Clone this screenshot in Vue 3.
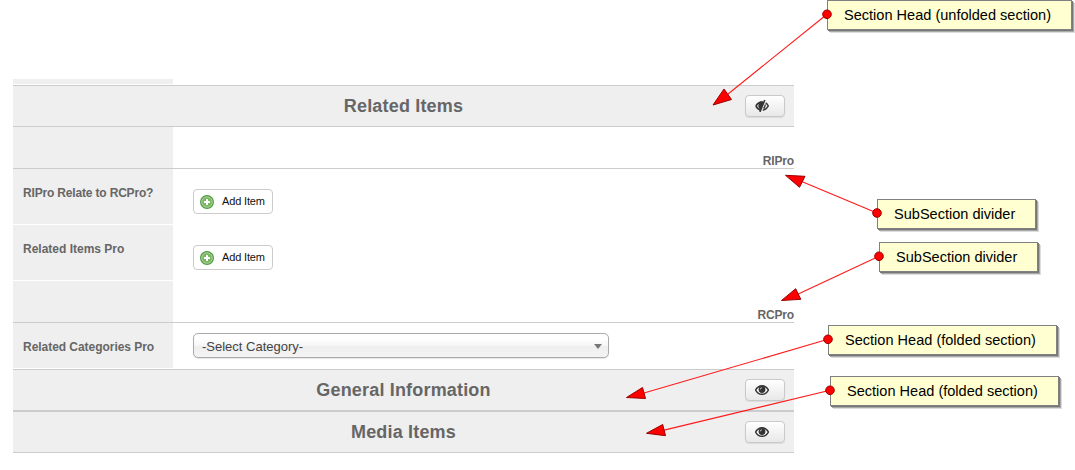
<script setup>
const rows = [
  { type: 'head', title: 'Related Items', open: true },
  { type: 'divider', title: 'RIPro' },
  { type: 'item', label: 'RIPro Relate to RCPro?', tight: true },
  { type: 'item', label: 'Related Items Pro' },
  { type: 'divider', title: 'RCPro' },
  { type: 'select', label: 'Related Categories Pro', value: '-Select Category-' },
  { type: 'head', title: 'General Information', open: false },
  { type: 'head', title: 'Media Items', open: false },
]

const notes = [
  { text: 'Section Head (unfolded section)', x: 827, y: 0, w: 245, dot: [827, 14.3], tip: [713, 105], base: [724, 89, 731.5, 99.5] },
  { text: 'SubSection divider', x: 877, y: 199, w: 159, dot: [877, 213], tip: [785.5, 175.3], base: [805, 176.3, 799.5, 187.3] },
  { text: 'SubSection divider', x: 879, y: 242, w: 159, dot: [879, 256.3], tip: [781.5, 300.5], base: [795.7, 288.7, 800.8, 299.3] },
  { text: 'Section Head (folded section)', x: 828, y: 325, w: 229, dot: [828, 339.3], tip: [626.5, 397.5], base: [642.5, 387.5, 645.5, 398.5] },
  { text: 'Section Head (folded section)', x: 830, y: 376, w: 229, dot: [830, 390.3], tip: [646.5, 433.3], base: [662.7, 424.5, 665.5, 435.7] },
]
</script>

<template>
  <main class="page">
    <div class="form">
      <div class="stub"></div>
      <template v-for="(row, i) in rows" :key="i">
        <header v-if="row.type === 'head'" class="head">
          <h2>{{ row.title }}</h2>
          <button class="toggle" type="button">
            <svg width="14" height="12" viewBox="0 0 14 12">
              <template v-if="!row.open">
                <path d="M.6 6C3.7.3 10.3.3 13.4 6 10.3 11.7 3.7 11.7.6 6Z" fill="#fafafa" stroke="#333" stroke-width="1.5" />
                <circle cx="7" cy="5.5" r="3.4" fill="#333" />
                <path d="M5.3 5.4Q5.4 3.9 6.9 3.8" fill="none" stroke="#eee" stroke-width=".8" />
              </template>
              <template v-else>
                <path d="M.9 6Q3.2 1.9 7.8 1.9M.9 6Q2.6 9.3 5.3 10.1" fill="none" stroke="#333" stroke-width="1.7" />
                <path d="M8.9 2 5.6 9.6C3.3 8.3 2.7 5.5 3.9 3.4Q6 1.7 8.9 2Z" fill="#333" />
                <path d="M9.8 0 4.9 11.9" stroke="#333" stroke-width="1.6" />
                <path d="M10.7 2.8Q12.5 4 13.3 6 11.3 9.7 7.8 10.2M10 4.5Q10.6 6.8 8.5 8.4" fill="none" stroke="#333" stroke-width="1.4" />
              </template>
            </svg>
          </button>
        </header>
        <div v-else-if="row.type === 'divider'" class="divider">
          <span class="side"></span>
          <strong>{{ row.title }}</strong>
        </div>
        <div v-else class="row" :class="row.type">
          <label :class="{ tight: row.tight }">{{ row.label }}</label>
          <div class="field">
            <button v-if="row.type === 'item'" class="add" type="button">
              <svg width="14" height="14" viewBox="0 0 14 14">
                <circle cx="7" cy="7" r="6.4" fill="#78b860" stroke="#569747" stroke-width="1.1" />
                <circle cx="7" cy="7" r="5.2" fill="none" stroke="#b4dba5" stroke-width=".8" />
                <path d="M7 4v6M4 7h6" stroke="#fff" stroke-width="2" />
              </svg>
              <span>Add Item</span>
            </button>
            <div v-else class="select">
              <span>{{ row.value }}</span>
              <i></i>
            </div>
          </div>
        </div>
      </template>
    </div>

    <div v-for="(n, i) in notes" :key="i" class="note" :style="{ left: n.x + 'px', top: n.y + 'px', width: n.w + 'px' }">
      {{ n.text }}
    </div>
    <svg class="arrows" width="1075" height="470" viewBox="0 0 1075 470">
      <g v-for="(n, i) in notes" :key="i">
        <line :x1="n.dot[0]" :y1="n.dot[1]" :x2="(n.base[0] + n.base[2]) / 2" :y2="(n.base[1] + n.base[3]) / 2" stroke="#ff1a1a" stroke-width="1.1" />
        <polygon :points="[...n.tip, ...n.base].join(' ')" fill="#f00" stroke="#900" stroke-width="1" />
        <circle :cx="n.dot[0]" :cy="n.dot[1]" r="4.3" fill="#f00" stroke="#900" stroke-width="1" />
      </g>
    </svg>
  </main>
</template>

<style>
body { margin: 0; background: #fff; }
</style>

<style scoped>
* { box-sizing: border-box; }
.page {
  position: relative;
  width: 1075px;
  height: 470px;
  padding: 79px 0 0 13px;
  overflow: hidden;
  font-family: "Liberation Sans", Arial, sans-serif;
  color: #666;
}
.form { width: 781px; }
.stub { width: 160px; height: 5px; margin-bottom: 1px; background: #efefef; }
.head {
  display: grid;
  grid-template-columns: 49px 1fr 49px;
  align-items: center;
  height: 42px;
  background: #efefef;
  border: solid #ccc;
  border-width: 1px 0;
}
.head h2 {
  grid-column: 2;
  margin: 0;
  font-size: 18px;
  line-height: 20px;
  letter-spacing: .18px;
  text-align: center;
}
button { font-family: inherit; }
.toggle {
  display: flex;
  align-items: center;
  width: 40px;
  height: 22px;
  padding: 0 0 0 9px;
  border: 1px solid #c9c9c9;
  border-radius: 4px;
  background: linear-gradient(#fff, #e8e8e8);
  box-shadow: 0 1px 1px rgba(0, 0, 0, .08);
}
.divider {
  display: flex;
  justify-content: space-between;
  align-items: flex-end;
  height: 42px;
  border-bottom: 1px solid #ccc;
}
.side { width: 160px; height: 41px; background: #efefef; }
.divider strong { font-size: 12px; line-height: 14px; letter-spacing: -.15px; }
.row { display: flex; height: 56px; }
.row.select { height: 46px; }
label {
  width: 160px;
  padding: 16px 0 0 10px;
  background: #efefef;
  border-bottom: 1px solid #fff;
  font-size: 12px;
  line-height: 16px;
  font-weight: bold;
  white-space: nowrap;
}
label.tight { letter-spacing: -.17px; }
.row.select label { letter-spacing: -.04px; }
.field { padding: 20px 0 0 20px; }
.row.select .field { padding-top: 10px; }
.add {
  display: flex;
  align-items: center;
  gap: 8px;
  width: 80px;
  height: 25px;
  padding: 0 0 0 6px;
  border: 1px solid #ccc;
  border-radius: 4px;
  background: #fff;
  color: #111;
  font-size: 11px;
  letter-spacing: -.15px;
  white-space: nowrap;
}
.add span { line-height: 13px; padding-bottom: 1px; }
.field .select {
  display: flex;
  justify-content: space-between;
  align-items: center;
  width: 416px;
  height: 25px;
  padding: 1px 6px 0 8px;
  border: 1px solid #aaa;
  border-radius: 5px;
  background: linear-gradient(#fff 20%, #f6f6f6 50%, #eee 52%, #f4f4f4 100%);
  box-shadow: 0 1px 1px rgba(0, 0, 0, .1);
  color: #444;
  font-size: 13px;
}
.select i { border: solid transparent; border-width: 5px 4.5px 0; border-top-color: #777; }
.note {
  position: absolute;
  height: 30px;
  padding-left: 16px;
  border: 1px solid #808080;
  background: #ffffd2;
  box-shadow: 1px 1px 0 #777, 2px 2px 0 #aaa, 3px 3px 0 #dcdcdc;
  color: #000;
  font-size: 14.55px;
  line-height: 28px;
  white-space: nowrap;
}
.arrows { position: absolute; left: 0; top: 0; }
</style>
